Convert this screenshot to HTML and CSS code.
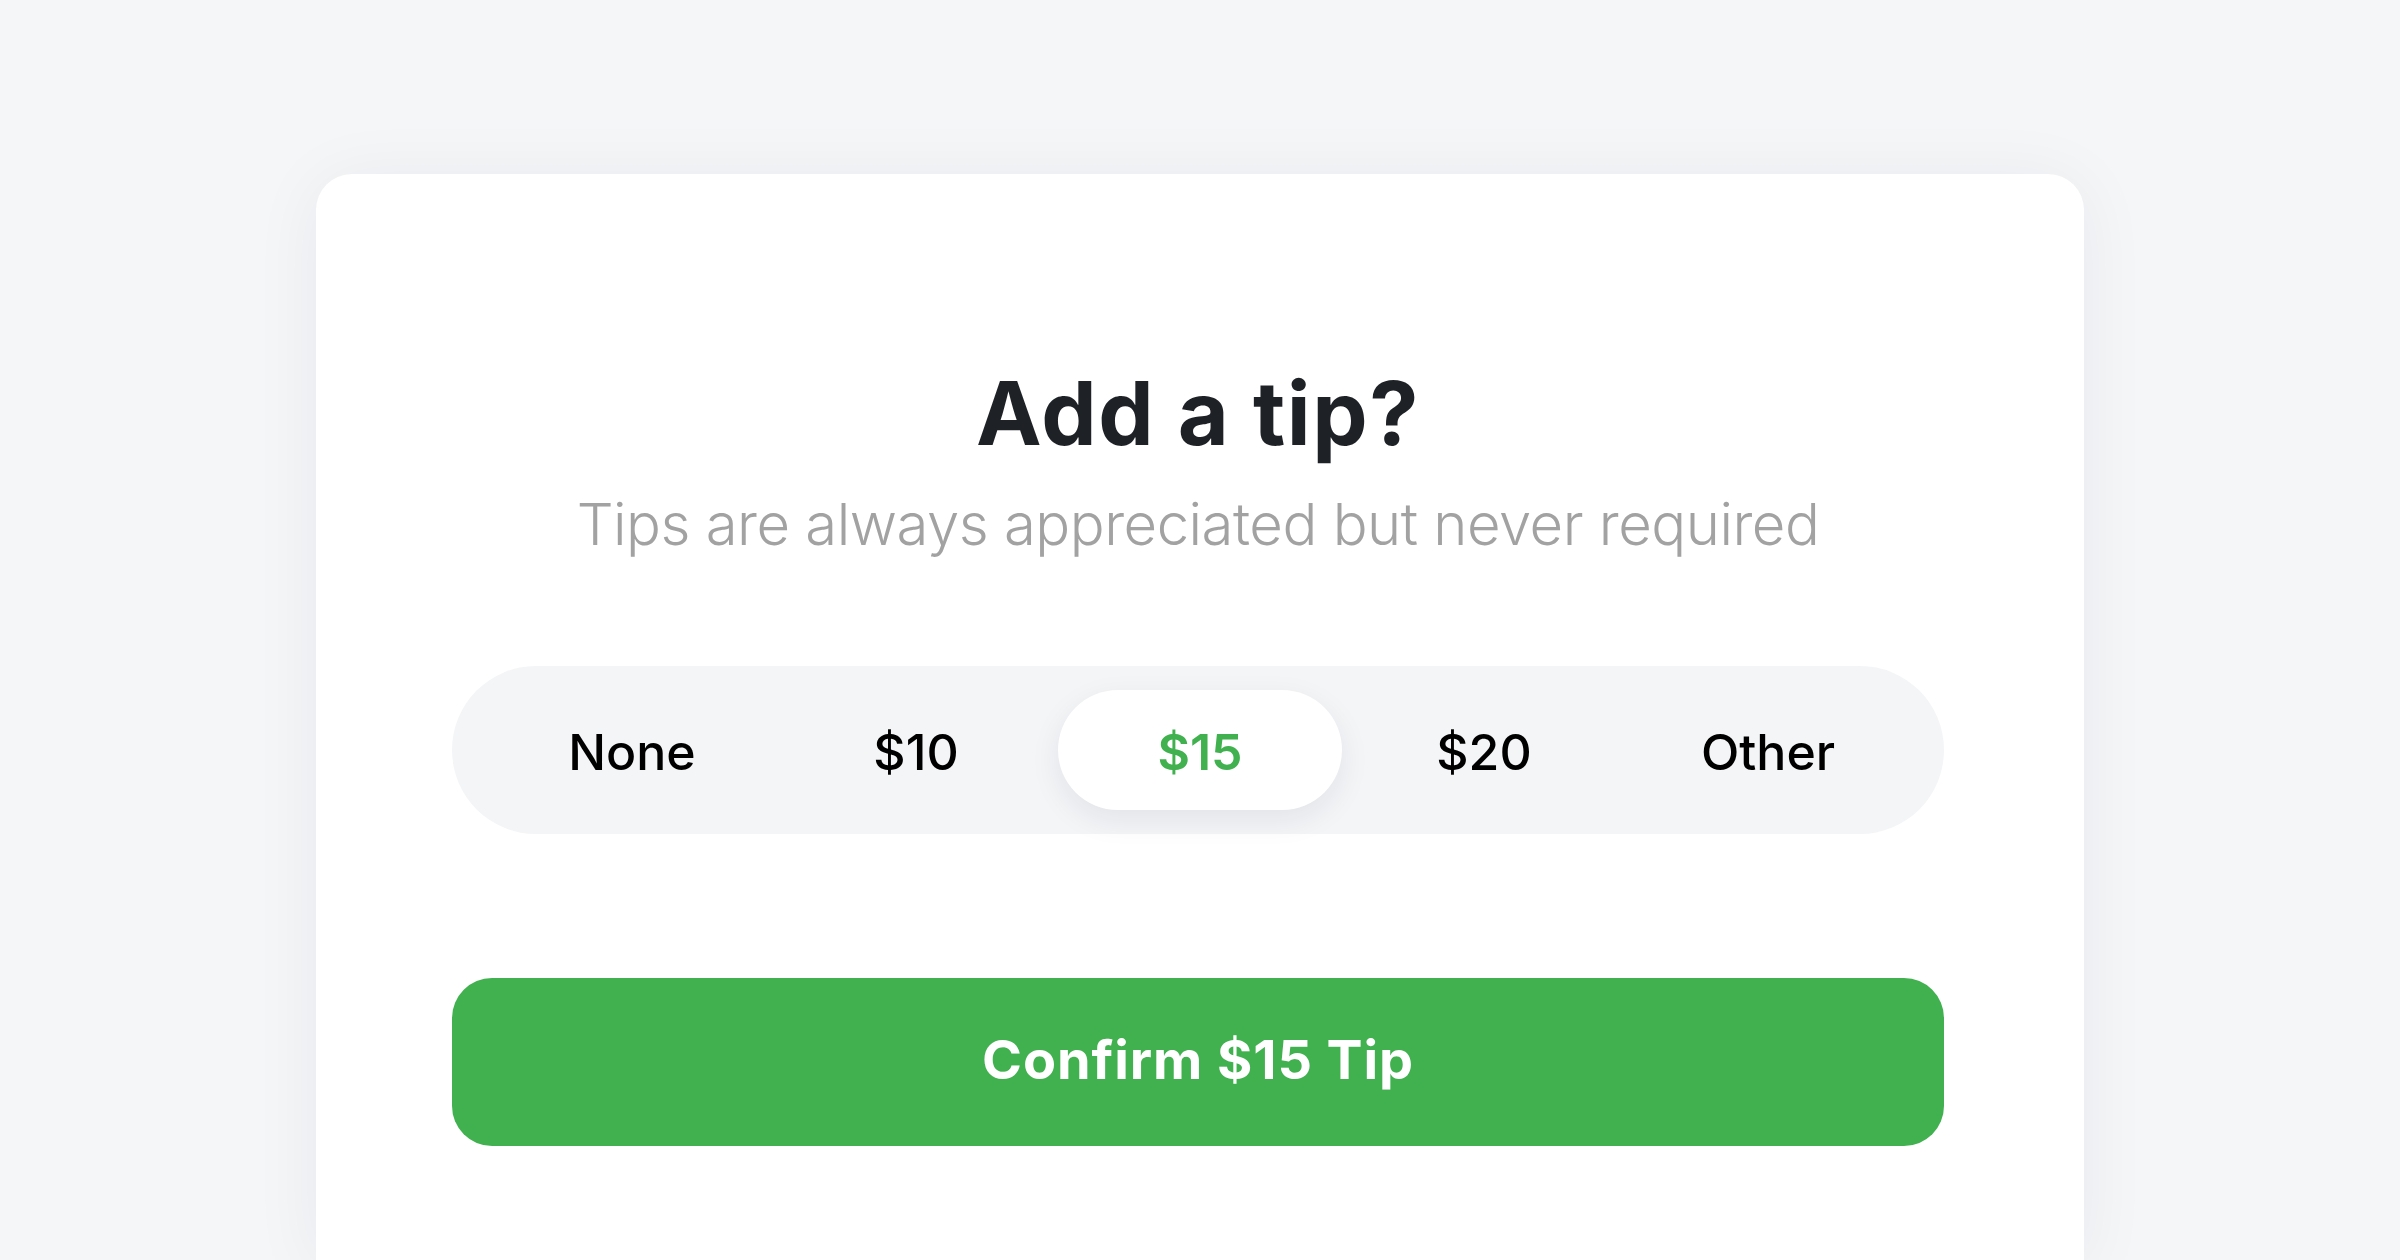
FILE: index.html
```html
<!DOCTYPE html>
<html lang="en">
<head>
<meta charset="utf-8">
<title>Add a tip?</title>
<link rel="stylesheet" href="styles.css">
</head>
<body>
<main class="page">
  <section class="card">
    <h1 class="title">Add a tip?</h1>
    <p class="subtitle">Tips are always appreciated but never required</p>
    <div class="segment">
      <button class="option">None</button>
      <button class="option">$10</button>
      <button class="option option-active">$15</button>
      <button class="option">$20</button>
      <button class="option">Other</button>
    </div>
    <button class="confirm">Confirm $15 Tip</button>
  </section>
</main>
</body>
</html>
```

FILE: styles.css
```css
html, body {
  margin: 0;
  padding: 0;
}
body {
  background: #f5f6f8;
  font-family: Inter, "Noto Sans", sans-serif;
  width: 2400px;
  height: 1260px;
  overflow: hidden;
}
.page {
  padding-top: 174px;
  padding-left: 316px;
}
.card {
  width: 1768px;
  height: 1086px;
  box-sizing: border-box;
  background: #ffffff;
  border-radius: 36px 36px 0 0;
  box-shadow: 0 6px 70px rgba(20, 30, 50, 0.06);
  padding: 196px 140px 0 136px;
  display: flex;
  flex-direction: column;
  align-items: stretch;
}
.title {
  margin: 0;
  text-align: center;
  font-size: 88px;
  line-height: 87px;
  font-weight: 700;
  color: #1e2226;
  letter-spacing: 1.6px;
}
.subtitle {
  margin: 38px 0 0;
  text-align: center;
  font-size: 58px;
  line-height: 58px;
  font-weight: 300;
  color: #a2a2a2;
  letter-spacing: -0.5px;
}
.segment {
  margin-top: 113px;
  height: 168px;
  box-sizing: border-box;
  background: #f4f5f7;
  border-radius: 84px;
  padding: 24px 34px 24px 38px;
  display: grid;
  grid-template-columns: repeat(5, 1fr);
}
.option {
  border: 0;
  background: transparent;
  font-family: inherit;
  font-size: 50px;
  font-weight: 500;
  color: #000000;
  border-radius: 60px;
  display: flex;
  align-items: center;
  justify-content: center;
  padding: 3px 0 0;
  height: 120px;
}
.option-active {
  background: #ffffff;
  color: #41b150;
  font-weight: 600;
  box-shadow: 0 10px 30px rgba(20, 30, 50, 0.08);
}
.confirm {
  margin-top: 144px;
  height: 168px;
  border: 0;
  border-radius: 40px;
  background: #41b150;
  color: #ffffff;
  font-family: inherit;
  font-size: 54px;
  font-weight: 700;
  letter-spacing: 0.9px;
  display: flex;
  align-items: center;
  justify-content: center;
  padding: 0 0 6px;
}
```
